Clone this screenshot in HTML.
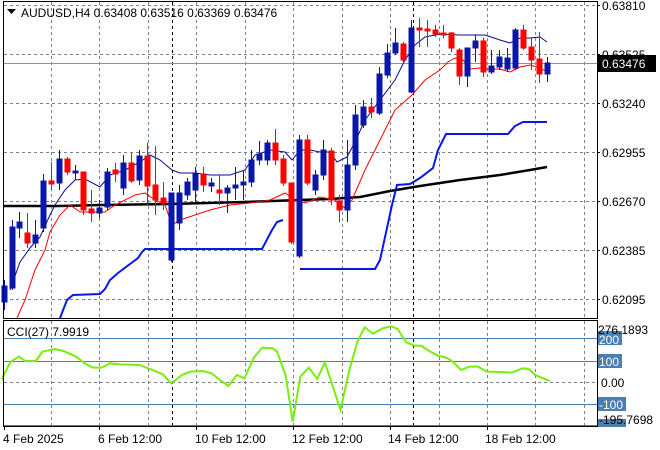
<!DOCTYPE html>
<html><head><meta charset="utf-8"><style>
html,body{margin:0;padding:0;background:#fff;}
svg{display:block;font-family:"Liberation Sans",Tahoma,sans-serif;}
</style></head><body>
<svg width="660" height="450" viewBox="0 0 660 450" xmlns="http://www.w3.org/2000/svg">
<rect width="660" height="450" fill="#fff"/>
<g stroke="#7a8290" stroke-width="1" stroke-dasharray="3,3" fill="none">
<path d="M4 5.5H597M4 54.5H597M4 103.5H597M4 152.5H597M4 201.5H597M4 250.5H597M4 299.5H597"/>
<path d="M51.5 2V318M99.5 2V318M148.5 2V318M196.5 2V318M245.5 2V318M293.5 2V318M342.5 2V318M390.5 2V318M439.5 2V318M487.5 2V318M535.5 2V318M584.5 2V318"/>
<path d="M51.5 321V426M99.5 321V426M148.5 321V426M196.5 321V426M245.5 321V426M293.5 321V426M342.5 321V426M390.5 321V426M439.5 321V426M487.5 321V426M535.5 321V426M584.5 321V426"/>
<path d="M4 382.5H597"/>
</g>
<g stroke="#000" stroke-dasharray="3,3"><path d="M172.5 2V318M172.5 321V426M413.5 2V318M413.5 321V426"/></g>
<path d="M4 63.5H597" stroke="#8a94a0"/>
<!-- thick black MA -->
<polyline fill="none" stroke="#000" stroke-width="2.5" points="4,206 60,206 100,205 170,204 245,202 300,200 330,199 360,197 390,191 420,186 460,180 500,175 530,170 547,167"/>
<!-- blue step -->
<polyline fill="none" stroke="#0a16e8" stroke-width="2" points="60,318 67,300 73,295 100,294 105,289 110,280 118,273 130,264 138,258 142,252 145,249 262,249 272,230 277,222 283,220"/>
<polyline fill="none" stroke="#0a16e8" stroke-width="2" points="300,269 375,269 380,260 392,205 397,185 410,184 420,178 433,168 438,150 446,134 508,134 515,126 523,122 547,122"/>
<!-- red MA -->
<polyline fill="none" stroke="#f00" stroke-width="1" points="17,318 25,300 35,270 45,250 50,232 60,215 70,205 80,212 92,212 105,212 115,205 125,200 135,195 145,193 155,200 165,205 172,225 180,220 195,215 210,210 230,205 250,203 270,200 285,193 295,200 305,203 320,197 335,200 345,208 352,200 365,170 380,140 395,110 403,103 412,95 425,80 440,70 448,62 455,58 463,60 470,69 480,68 490,69 500,69 510,72 520,67 530,65 540,68 547,72"/>
<!-- blue thin -->
<polyline fill="none" stroke="#0a0a90" stroke-width="1" points="10,290 20,262 30,248 40,237 50,215 55,205 65,190 75,180 85,179 100,187 110,175 125,170 140,162 150,155 160,160 172,170 180,173 195,173 210,175 230,175 245,170 255,155 270,150 285,152 292,160 300,150 310,150 320,152 330,152 337,162 347,157 355,142 365,120 380,100 395,80 405,60 415,45 425,37 440,34 460,35 485,35 500,40 510,43 520,38 530,38 540,37 547,42"/>
<g id="candles">
<script>/*no*/</script>
</g>
<g stroke-width="1">
<!-- x, bodyTop, bodyBot, hi, lo, color -->
</g>
<g id="c"></g>
<path d="" />
<g>
<!-- generated candles -->
<g stroke="#0a16a8" fill="#0a16a8">
<line x1="4.5" y1="280" x2="4.5" y2="310"/><rect x="2" y="286" width="5" height="16"/>
<line x1="12.5" y1="220" x2="12.5" y2="290"/><rect x="10" y="227" width="5" height="61"/>
<line x1="19.5" y1="212" x2="19.5" y2="238"/><rect x="17" y="222" width="5" height="6"/>
<line x1="35.5" y1="220" x2="35.5" y2="248"/><rect x="33" y="235" width="5" height="8"/>
<line x1="43.5" y1="174" x2="43.5" y2="232"/><rect x="41" y="181" width="5" height="47"/>
<line x1="59.5" y1="150" x2="59.5" y2="190"/><rect x="57" y="159" width="5" height="24"/>
<line x1="75.5" y1="165" x2="75.5" y2="180"/><rect x="73" y="171" width="5" height="2"/>
<line x1="99.5" y1="200" x2="99.5" y2="218"/><rect x="97" y="208" width="5" height="5"/>
<line x1="107.5" y1="168" x2="107.5" y2="210"/><rect x="105" y="172" width="5" height="35"/>
<line x1="123.5" y1="155" x2="123.5" y2="195"/><rect x="121" y="163" width="5" height="25"/>
<line x1="139.5" y1="150" x2="139.5" y2="185"/><rect x="137" y="156" width="5" height="24"/>
<line x1="171.5" y1="193" x2="171.5" y2="262"/><rect x="169" y="193" width="5" height="67"/>
<line x1="179.5" y1="185" x2="179.5" y2="230"/><rect x="177" y="193" width="5" height="30"/>
<line x1="187.5" y1="178" x2="187.5" y2="200"/><rect x="185" y="182" width="5" height="13"/>
<line x1="195.5" y1="167" x2="195.5" y2="202"/><rect x="193" y="174" width="5" height="16"/>
<line x1="211.5" y1="178" x2="211.5" y2="192"/><rect x="209" y="183" width="5" height="3"/>
<line x1="227.5" y1="185" x2="227.5" y2="213"/><rect x="225" y="188" width="5" height="5"/>
<line x1="235.5" y1="167" x2="235.5" y2="200"/><rect x="233" y="185" width="5" height="3"/>
<line x1="243.5" y1="170" x2="243.5" y2="200"/><rect x="241" y="182" width="5" height="3"/>
<line x1="251.5" y1="150" x2="251.5" y2="187"/><rect x="249" y="160" width="5" height="22"/>
<line x1="259.5" y1="141" x2="259.5" y2="165"/><rect x="257" y="154" width="5" height="6"/>
<line x1="267.5" y1="140" x2="267.5" y2="165"/><rect x="265" y="143" width="5" height="17"/>
<line x1="299.5" y1="135" x2="299.5" y2="258"/><rect x="297" y="140" width="5" height="116"/>
<line x1="315.5" y1="170" x2="315.5" y2="195"/><rect x="313" y="175" width="5" height="15"/>
<line x1="323.5" y1="140" x2="323.5" y2="180"/><rect x="321" y="150" width="5" height="25"/>
<line x1="347.5" y1="140" x2="347.5" y2="222"/><rect x="345" y="165" width="5" height="45"/>
<line x1="355.5" y1="105" x2="355.5" y2="170"/><rect x="353" y="115" width="5" height="50"/>
<line x1="363.5" y1="100" x2="363.5" y2="128"/><rect x="361" y="107" width="5" height="18"/>
<line x1="379.5" y1="67" x2="379.5" y2="115"/><rect x="377" y="74" width="5" height="39"/>
<line x1="387.5" y1="44" x2="387.5" y2="78"/><rect x="385" y="53" width="5" height="22"/>
<line x1="395.5" y1="28" x2="395.5" y2="55"/><rect x="393" y="43" width="5" height="10"/>
<line x1="411.5" y1="20" x2="411.5" y2="93"/><rect x="409" y="28" width="5" height="64"/>
<line x1="467.5" y1="48" x2="467.5" y2="87"/><rect x="465" y="48" width="5" height="28"/>
<line x1="475.5" y1="35" x2="475.5" y2="62"/><rect x="473" y="41" width="5" height="7"/>
<line x1="491.5" y1="50" x2="491.5" y2="74"/><rect x="489" y="66" width="5" height="6"/>
<line x1="499.5" y1="50" x2="499.5" y2="70"/><rect x="497" y="57" width="5" height="10"/>
<line x1="507.5" y1="48" x2="507.5" y2="72"/><rect x="505" y="58" width="5" height="11"/>
<line x1="515.5" y1="28" x2="515.5" y2="70"/><rect x="513" y="30" width="5" height="38"/>
<line x1="547.5" y1="57" x2="547.5" y2="82"/><rect x="545" y="63" width="5" height="11"/>
</g>
<g stroke="#f00" fill="#f00">
<line x1="27.5" y1="213" x2="27.5" y2="248"/><rect x="25" y="233" width="5" height="10"/>
<line x1="51.5" y1="162" x2="51.5" y2="190"/><rect x="49" y="181" width="5" height="3"/>
<line x1="67.5" y1="157" x2="67.5" y2="175"/><rect x="65" y="159" width="5" height="13"/>
<line x1="83.5" y1="172" x2="83.5" y2="215"/><rect x="81" y="172" width="5" height="38"/>
<line x1="91.5" y1="190" x2="91.5" y2="222"/><rect x="89" y="209" width="5" height="4"/>
<line x1="115.5" y1="163" x2="115.5" y2="182"/><rect x="113" y="170" width="5" height="4"/>
<line x1="131.5" y1="153" x2="131.5" y2="183"/><rect x="129" y="163" width="5" height="18"/>
<line x1="147.5" y1="143" x2="147.5" y2="205"/><rect x="145" y="156" width="5" height="30"/>
<line x1="155.5" y1="146" x2="155.5" y2="215"/><rect x="153" y="185" width="5" height="15"/>
<line x1="163.5" y1="182" x2="163.5" y2="210"/><rect x="161" y="198" width="5" height="5"/>
<line x1="203.5" y1="167" x2="203.5" y2="192"/><rect x="201" y="174" width="5" height="11"/>
<line x1="219.5" y1="175" x2="219.5" y2="205"/><rect x="217" y="190" width="5" height="3"/>
<line x1="275.5" y1="129" x2="275.5" y2="165"/><rect x="273" y="143" width="5" height="17"/>
<line x1="283.5" y1="155" x2="283.5" y2="186"/><rect x="281" y="159" width="5" height="24"/>
<line x1="291.5" y1="183" x2="291.5" y2="244"/><rect x="289" y="183" width="5" height="59"/>
<line x1="307.5" y1="135" x2="307.5" y2="185"/><rect x="305" y="140" width="5" height="43"/>
<line x1="331.5" y1="148" x2="331.5" y2="205"/><rect x="329" y="151" width="5" height="49"/>
<line x1="339.5" y1="195" x2="339.5" y2="222"/><rect x="337" y="201" width="5" height="9"/>
<line x1="371.5" y1="98" x2="371.5" y2="118"/><rect x="369" y="107" width="5" height="5"/>
<line x1="403.5" y1="42" x2="403.5" y2="62"/><rect x="401" y="44" width="5" height="16"/>
<line x1="419.5" y1="18" x2="419.5" y2="47"/><rect x="417" y="28" width="5" height="2"/>
<line x1="427.5" y1="20" x2="427.5" y2="47"/><rect x="425" y="29" width="5" height="2"/>
<line x1="435.5" y1="25" x2="435.5" y2="37"/><rect x="433" y="30" width="5" height="4"/>
<line x1="443.5" y1="25" x2="443.5" y2="38"/><rect x="441" y="33" width="5" height="2"/>
<line x1="451.5" y1="32" x2="451.5" y2="52"/><rect x="449" y="33" width="5" height="15"/>
<line x1="459.5" y1="48" x2="459.5" y2="85"/><rect x="457" y="50" width="5" height="26"/>
<line x1="483.5" y1="38" x2="483.5" y2="77"/><rect x="481" y="41" width="5" height="31"/>
<line x1="523.5" y1="25" x2="523.5" y2="50"/><rect x="521" y="30" width="5" height="18"/>
<line x1="531.5" y1="38" x2="531.5" y2="70"/><rect x="529" y="47" width="5" height="13"/>
<line x1="539.5" y1="32" x2="539.5" y2="83"/><rect x="537" y="59" width="5" height="15"/>
</g>
</g>
<!-- CCI levels -->
<path d="M4 338.5H597M4 361.5H597M4 404.5H597M4 425.5H597" stroke="#4a7fb0" stroke-width="1"/>
<g transform="translate(0,225) scale(0.423,0.3333)">
<polyline fill="none" stroke="#7cec0c" stroke-width="2" vector-effect="non-scaling-stroke" points="4,463 25,410 45,395 60,408 85,408 100,380 130,372 150,378 180,395 200,415 220,428 240,428 260,415 285,418 330,420 360,435 385,448 405,475 430,450 450,440 480,438 500,445 520,465 540,483 560,450 578,460 600,398 620,368 645,370 655,380 675,450 692,590 710,455 730,428 750,462 768,412 805,555 825,440 845,350 862,307 882,326 905,310 925,304 940,312 960,352 980,362 995,362 1015,378 1035,392 1055,398 1070,410 1090,435 1110,425 1130,425 1150,440 1185,441 1210,443 1235,430 1250,432 1265,450 1300,468"/>
</g>
<!-- frames -->
<rect x="3.5" y="1.5" width="594" height="317" fill="none" stroke="#000"/>
<rect x="3.5" y="320.5" width="594" height="106" fill="none" stroke="#000"/>
<!-- header -->
<path d="M7 9h9l-4.5 5z" fill="#000"/>
<text x="21" y="17" font-size="12" fill="#000">AUDUSD,H4  0.63408 0.63516 0.63369 0.63476</text>
<text x="7" y="336" font-size="12" fill="#000">CCI(27) 7.9919</text>
<!-- price axis -->
<g font-size="12" fill="#000">
<text x="602" y="10">0.63810</text>
<text x="602" y="59">0.63525</text>
<text x="602" y="108">0.63240</text>
<text x="602" y="157">0.62955</text>
<text x="602" y="206">0.62670</text>
<text x="602" y="255">0.62385</text>
<text x="602" y="304">0.62095</text>
</g>
<rect x="598" y="55" width="58" height="17" fill="#000"/>
<text x="602" y="68" font-size="12" fill="#fff">0.63476</text>
<path d="M597 5.5h3M597 54.5h3M597 103.5h3M597 152.5h3M597 201.5h3M597 250.5h3M597 299.5h3" stroke="#000"/>
<!-- cci axis -->
<rect x="598" y="331" width="24" height="14" fill="#4a7fb0"/>
<rect x="598" y="354" width="24" height="14" fill="#4a7fb0"/>
<rect x="598" y="397" width="28" height="14" fill="#4a7fb0"/>
<rect x="598" y="419" width="28" height="8" fill="#4a7fb0"/>
<g font-size="12" fill="#000">
<text x="598" y="334">276.1893</text>
<text x="599" y="344" fill="#fff">200</text>
<text x="599" y="366" fill="#fff">100</text>
<text x="601" y="387">0.00</text>
<text x="599" y="409" fill="#fff">-100</text>
<text x="599" y="424">-195.7698</text>
</g>
<!-- time axis -->
<path d="M4.5 426v4M99.5 426v4M196.5 426v4M293.5 426v4M390.5 426v4M487.5 426v4" stroke="#000"/>
<g font-size="12" fill="#000">
<text x="3" y="443">4 Feb 2025</text>
<text x="98" y="443">6 Feb 12:00</text>
<text x="195" y="443">10 Feb 12:00</text>
<text x="292" y="443">12 Feb 12:00</text>
<text x="388" y="443">14 Feb 12:00</text>
<text x="485" y="443">18 Feb 12:00</text>
</g>
</svg>
</body></html>
